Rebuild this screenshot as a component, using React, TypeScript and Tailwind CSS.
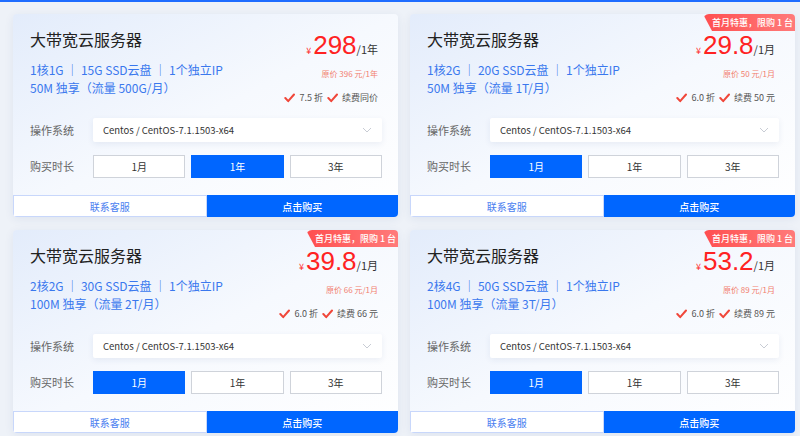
import React from 'react';

type Plan = {
  spec: string;
  band: string;
  price: string;
  unit: string;
  orig: string;
  discount: string;
  renew: string;
  active: number;
  promo: boolean;
};

const plans: Plan[] = [
  { spec: '1核1G ｜ 15G SSD云盘 ｜ 1个独立IP', band: '50M 独享（流量 500G/月）', price: '298', unit: '/1年', orig: '原价 396 元/1年', discount: '7.5 折', renew: '续费同价', active: 1, promo: false },
  { spec: '1核2G ｜ 20G SSD云盘 ｜ 1个独立IP', band: '50M 独享（流量 1T/月）', price: '29.8', unit: '/1月', orig: '原价 50 元/1月', discount: '6.0 折', renew: '续费 50 元', active: 0, promo: true },
  { spec: '2核2G ｜ 30G SSD云盘 ｜ 1个独立IP', band: '100M 独享（流量 2T/月）', price: '39.8', unit: '/1月', orig: '原价 66 元/1月', discount: '6.0 折', renew: '续费 66 元', active: 0, promo: true },
  { spec: '2核4G ｜ 50G SSD云盘 ｜ 1个独立IP', band: '100M 独享（流量 3T/月）', price: '53.2', unit: '/1月', orig: '原价 89 元/1月', discount: '6.0 折', renew: '续费 89 元', active: 0, promo: true },
];

function Check() {
  return (
    <svg width="11" height="10" viewBox="0 0 11 10" className="shrink-0">
      <path d="M1.3 5 L4.2 8.2 L10 1.5" fill="none" stroke="#f0473a" strokeWidth="2" strokeLinecap="round" strokeLinejoin="round" />
    </svg>
  );
}

function Card({ plan }: { plan: Plan }) {
  const terms = ['1月', '1年', '3年'];
  return (
    <div className="relative w-[385px] h-[203px] flex flex-col rounded-[4px] overflow-hidden bg-gradient-to-br from-[#e3ecfb] via-[#f6f9fe] to-white shadow-[0_2px_10px_rgba(40,70,130,0.08)]">
      {plan.promo && (
        <div className="absolute top-0 right-0 w-[92px] h-[17px] flex items-center justify-center pl-[7px] whitespace-nowrap text-[9px] leading-none font-medium text-white bg-gradient-to-r from-[#ff4d4f] to-[#ff7a7a] rounded-tl-[6px] [clip-path:polygon(0_0,100%_0,100%_100%,9px_100%)]">
          首月特惠，限购 1 台
        </div>
      )}

      <div className="flex-1 flex flex-col">
        <div className="flex justify-between pl-[17px] pr-[20px]">
          <div className="pt-[13px]">
            <div className="text-[16px] leading-[24px] text-[#222]">大带宽云服务器</div>
            <div className="mt-[10px] text-[12px] leading-[18px] text-[#3a78ee]">
              <div className="whitespace-pre">{plan.spec}</div>
              <div>{plan.band}</div>
            </div>
          </div>
          <div className="pt-[18px] flex flex-col items-end">
            <div className="flex items-baseline h-[26px] leading-[26px]">
              <span className="text-[9px] text-[#ff2a2a] mr-[2px]">¥</span>
              <span className="text-[26px] text-[#ff2222] font-['Liberation_Sans',sans-serif]">{plan.price}</span>
              <span className="text-[11px] text-[#333]">{plan.unit}</span>
            </div>
            <div className="mt-[9px] text-[8px] leading-[14px] text-[#f2806f]">{plan.orig}</div>
            <div className="mt-[9px] flex items-center gap-[4px] text-[9px] leading-[16px] text-[#555]">
              <Check />
              <span>{plan.discount}</span>
              <Check />
              <span>{plan.renew}</span>
            </div>
          </div>
        </div>

        <div className="mt-[12px] flex items-center pl-[17px] pr-[16px]">
          <div className="w-[63px] text-[11px] text-[#666]">操作系统</div>
          <div className="flex-1 h-[24px] flex items-center justify-between px-[10px] bg-white shadow-[0_2px_6px_rgba(40,70,130,0.08)] rounded-[2px]">
            <span className="text-[9.5px] text-[#333]">Centos / CentOS-7.1.1503-x64</span>
            <svg width="10" height="6" viewBox="0 0 10 6">
              <path d="M1 1 L5 5 L9 1" fill="none" stroke="#c8ccd4" strokeWidth="1" />
            </svg>
          </div>
        </div>

        <div className="mt-[13px] flex items-center pl-[17px] pr-[16px]">
          <div className="w-[63px] text-[11px] text-[#666]">购买时长</div>
          <div className="flex-1 grid grid-cols-3 gap-[6px]">
            {terms.map((t, i) => (
              <div
                key={t}
                className={`h-[23px] flex items-center justify-center text-[10px] ${
                  i === plan.active ? 'bg-[#0066ff] text-white border border-[#0066ff]' : 'bg-white text-[#333] border border-[#cfd3da]'
                }`}
              >
                {t}
              </div>
            ))}
          </div>
        </div>
      </div>

      <div className="h-[22px] flex text-[10px]">
        <div className="flex-1 flex items-center justify-center bg-white border border-[#c8d7fb] text-[#4a7ef0]">联系客服</div>
        <div className="flex-1 flex items-center justify-center bg-[#0066ff] text-white font-medium">点击购买</div>
      </div>
    </div>
  );
}

export default function App() {
  return (
    <div className="h-[436px] overflow-hidden bg-[#eef2f8] font-['Noto_Sans_CJK_SC','Noto_Sans',sans-serif]">
      <div className="h-[2px] bg-[#1f6dff]" />
      <div className="pl-[13px] pt-[12px] grid grid-cols-[385px_385px] gap-x-[12px] gap-y-[13px]">
        {plans.map((p, i) => (
          <Card key={i} plan={p} />
        ))}
      </div>
    </div>
  );
}
